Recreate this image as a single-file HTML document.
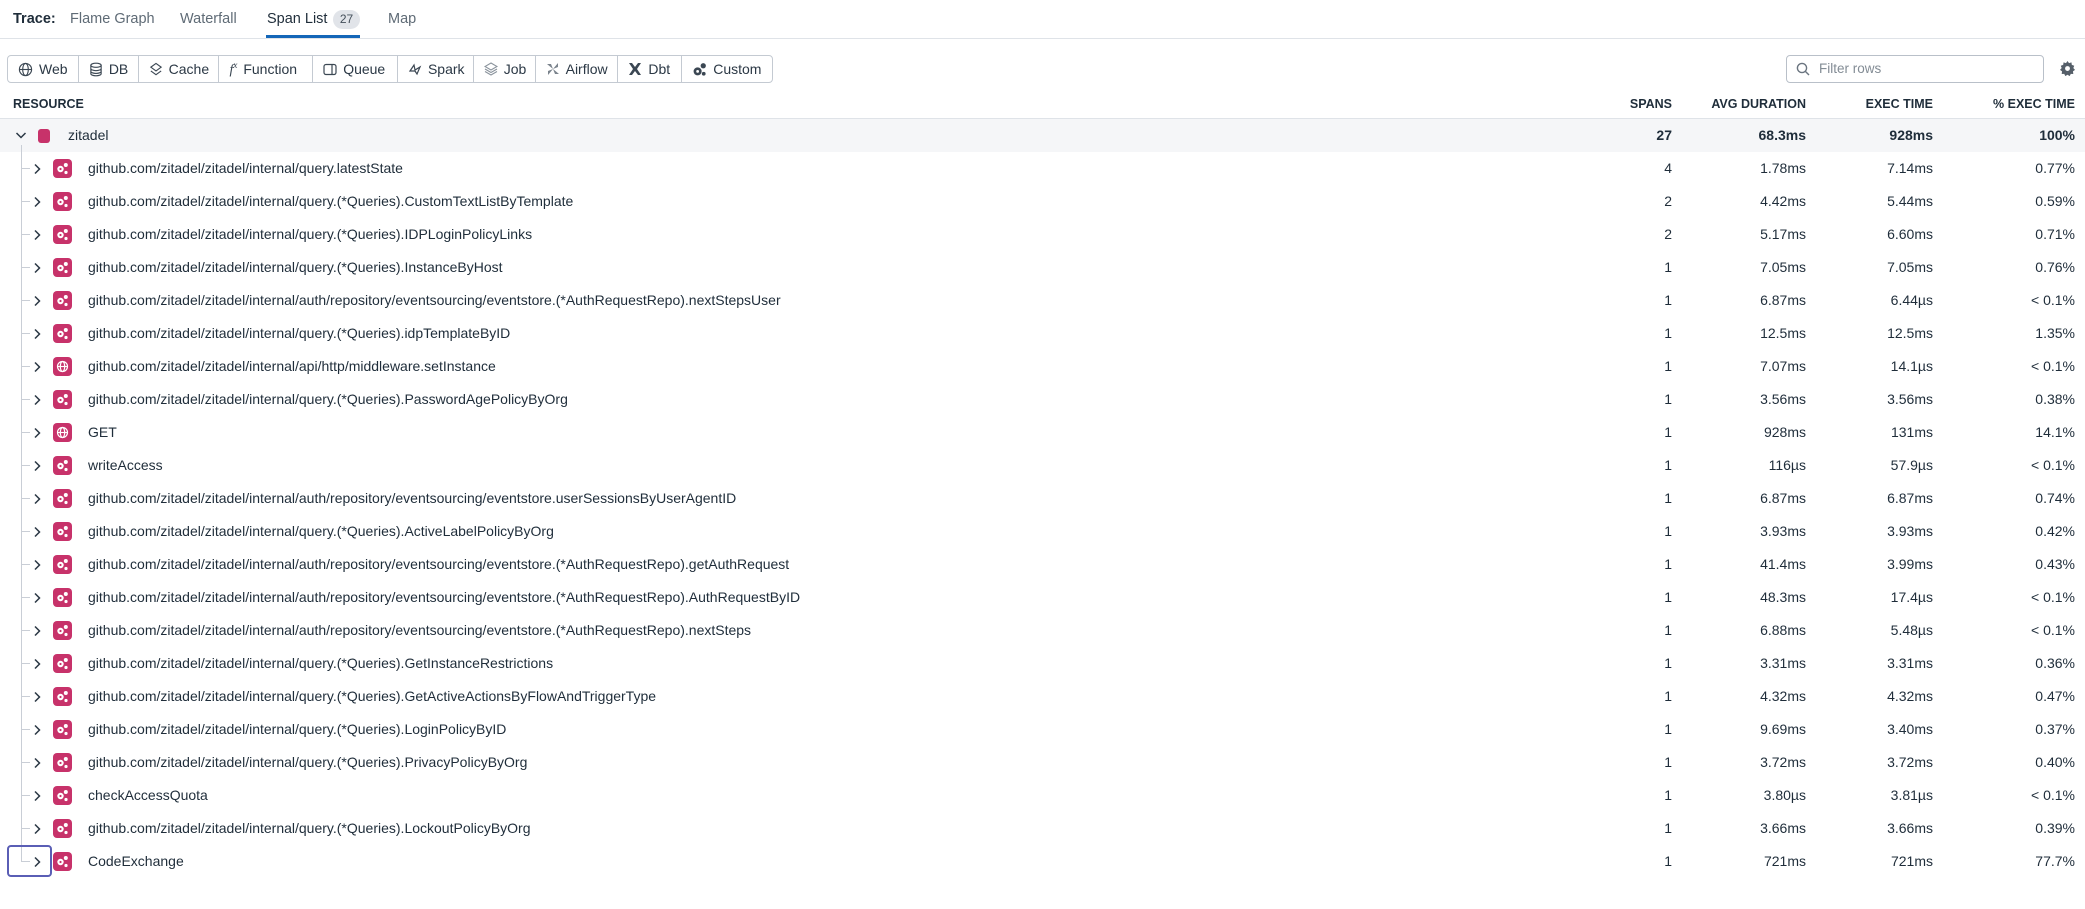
<!DOCTYPE html>
<html><head><meta charset="utf-8"><style>
*{box-sizing:border-box;margin:0;padding:0}
body{width:2085px;height:909px;background:#fff;font-family:"Liberation Sans",sans-serif;color:#1f2d3a;font-size:14px;position:relative;overflow:hidden}
.a{position:absolute;white-space:nowrap}
.tab{top:11px;font-size:14.5px;color:#5f6b76}
.btnbar{position:absolute;left:7px;top:55px;width:766px;height:28px;border:1px solid #c4cad2;border-radius:4px;display:flex}
.btn{height:100%;border-right:1px solid #c4cad2;display:flex;align-items:center;gap:6px;padding-left:10px;font-size:14px;color:#2b3845}
.btn:last-child{border-right:none}
.btn svg{flex:none}
.hd{top:97px;font-size:12.5px;font-weight:bold;color:#1f2d3a}
.row{position:absolute;left:0;width:2085px;height:33px}
.row .c{position:absolute;top:8px;font-size:14px}
.r{text-align:right}
.ic{position:absolute;left:53px;top:7px;width:19px;height:19px;border-radius:4px;background:#c7326a}
.chev{position:absolute;left:33px;top:11px}
.stub{position:absolute;left:21px;top:16px;width:9px;height:1px;background:#c9ced6}
</style></head><body>
<div class="a tab" style="left:13px;color:#1f2d3a;font-weight:bold">Trace:</div>
<div class="a tab" style="left:70px">Flame Graph</div>
<div class="a tab" style="left:180px">Waterfall</div>
<div class="a tab" style="left:267px;color:#1f2d3a">Span List</div>
<div class="a" style="left:333px;top:10px;width:27px;height:19px;border-radius:10px;background:#e1e4e9;font-size:12px;color:#444f5a;text-align:center;line-height:19px">27</div>
<div class="a tab" style="left:388px">Map</div>
<div class="a" style="left:266px;top:35px;width:94px;height:3px;background:#1466b8"></div>
<div class="a" style="left:0;top:38px;width:2085px;height:1px;background:#dfe3e8"></div>

<div class="btnbar">
<div class="btn" style="width:71px"><svg width="15" height="15" viewBox="0 0 16 16" fill="none" stroke="#3b4753" stroke-width="1.2"><circle cx="8" cy="8" r="6.5"/><ellipse cx="8" cy="8" rx="3" ry="6.5"/><path d="M1.5 8h13"/></svg>Web</div>
<div class="btn" style="width:60px"><svg width="14" height="15" viewBox="0 0 14 16" fill="none" stroke="#3b4753" stroke-width="1.2"><ellipse cx="7" cy="3.5" rx="5.5" ry="2.2"/><path d="M1.5 3.5v9c0 1.2 2.5 2.2 5.5 2.2s5.5-1 5.5-2.2v-9M1.5 7c0 1.2 2.5 2.2 5.5 2.2s5.5-1 5.5-2.2M1.5 10c0 1.2 2.5 2.2 5.5 2.2s5.5-1 5.5-2.2"/></svg>DB</div>
<div class="btn" style="width:81px"><svg width="14" height="15" viewBox="0 0 14 16" fill="none" stroke="#3b4753" stroke-width="1.2"><path d="M7 1.5l5.5 4-5.5 4-5.5-4zM1.5 9.5l5.5 4 5.5-4"/></svg>Cache</div>
<div class="btn" style="width:94px"><span style="font-style:italic;font-family:'Liberation Serif',serif;font-size:14px;color:#3b4753">f<sup style="font-size:9px">x</sup></span>Function</div>
<div class="btn" style="width:85px"><svg width="14" height="13" viewBox="0 0 14 13" fill="none" stroke="#3b4753" stroke-width="1.2"><rect x="1" y="1.5" width="12" height="10" rx="2"/><path d="M9 1.5v10"/></svg>Queue</div>
<div class="btn" style="width:76px"><svg width="14" height="14" viewBox="0 0 14 14" fill="none" stroke="#3b4753" stroke-width="1.2"><path d="M2 9l4-6 1 5 5-3-3 7-2-3z"/></svg>Spark</div>
<div class="btn" style="width:62px"><svg width="14" height="14" viewBox="0 0 14 14" fill="none" stroke="#8a939c" stroke-width="1.1"><path d="M7 1l6 3.5-6 3.5-6-3.5zM1 7l6 3.5 6-3.5M1 9.5l6 3.5 6-3.5"/></svg>Job</div>
<div class="btn" style="width:83px"><svg width="14" height="14" viewBox="0 0 14 14" fill="#7a838c"><path d="M7 7L1 2l4 0zM7 7l5-6v4zM7 7l6 5h-4zM7 7l-5 6V9z"/></svg>Airflow</div>
<div class="btn" style="width:64px"><svg width="14" height="14" viewBox="0 0 14 14" fill="#3b4753"><path d="M1 1h3l3 4 3-4h3l-4 6 4 6h-3l-3-4-3 4H1l4-6z"/></svg>Dbt</div>
<div class="btn" style="width:90px"><svg width="15" height="15" viewBox="0 0 16 16" fill="#3b4753"><circle cx="6" cy="10" r="4.3"/><circle cx="12" cy="4" r="2.8"/><circle cx="12.5" cy="12.5" r="2"/><circle cx="6" cy="10" r="1.5" fill="#fff"/></svg>Custom</div>
</div>

<div class="a" style="left:1786px;top:55px;width:258px;height:28px;border:1px solid #b9c0c9;border-radius:4px"></div>
<svg class="a" style="left:1796px;top:62px" width="14" height="14" viewBox="0 0 14 14" fill="none" stroke="#6b7580" stroke-width="1.4"><circle cx="6" cy="6" r="4.6"/><path d="M9.5 9.5l3.5 3.5"/></svg>
<div class="a" style="left:1819px;top:61px;font-size:13.5px;color:#838c95">Filter rows</div>
<svg class="a" style="left:2060px;top:61px" width="15" height="15" viewBox="0 0 16 16"><path fill="#555f69" d="M8 0l1.6 2.2 2.6-.8.4 2.7 2.6.9-1 2.5 1.8 2-2.2 1.6.4 2.7-2.7-.1-1.2 2.4L8 14.6l-2.3 1.5-1.2-2.4-2.7.1.4-2.7L0 9.5l1.8-2-1-2.5 2.6-.9.4-2.7 2.6.8z"/><circle cx="8" cy="8" r="2.6" fill="#fff"/></svg>

<div class="a hd" style="left:13px">RESOURCE</div>
<div class="a hd r" style="right:413px">SPANS</div>
<div class="a hd r" style="right:279px">AVG DURATION</div>
<div class="a hd r" style="right:152px">EXEC TIME</div>
<div class="a hd r" style="right:10px">% EXEC TIME</div>
<div class="a" style="left:0;top:118px;width:2085px;height:1px;background:#dfe3e8"></div>

<div class="row" style="top:119px;background:#f5f6f8;height:33px">
<svg class="a" style="left:15px;top:12px" width="12" height="9" viewBox="0 0 12 9" fill="none" stroke="#2b3845" stroke-width="1.5"><path d="M1.5 2l4.5 4.5L10.5 2"/></svg>
<div class="a" style="left:38px;top:10px;width:12px;height:14px;border-radius:3px;background:#c7326a"></div>
<div class="c" style="left:68px">zitadel</div>
<div class="c r" style="right:413px;font-weight:bold">27</div>
<div class="c r" style="right:279px;font-weight:bold">68.3ms</div>
<div class="c r" style="right:152px;font-weight:bold">928ms</div>
<div class="c r" style="right:10px;font-weight:bold">100%</div>
</div>
<div class="a" style="left:21px;top:145px;width:1px;height:717px;background:#c9ced6"></div>
<div class="a" style="left:7px;top:845px;width:45px;height:32px;border:2px solid #5a5eb5;border-radius:4px"></div>

<div id="rows"></div>
<script>
var d=[["github.com/zitadel/zitadel/internal/query.latestState","4","1.78ms","7.14ms","0.77%"],
["github.com/zitadel/zitadel/internal/query.(*Queries).CustomTextListByTemplate","2","4.42ms","5.44ms","0.59%"],
["github.com/zitadel/zitadel/internal/query.(*Queries).IDPLoginPolicyLinks","2","5.17ms","6.60ms","0.71%"],
["github.com/zitadel/zitadel/internal/query.(*Queries).InstanceByHost","1","7.05ms","7.05ms","0.76%"],
["github.com/zitadel/zitadel/internal/auth/repository/eventsourcing/eventstore.(*AuthRequestRepo).nextStepsUser","1","6.87ms","6.44µs","< 0.1%"],
["github.com/zitadel/zitadel/internal/query.(*Queries).idpTemplateByID","1","12.5ms","12.5ms","1.35%"],
["github.com/zitadel/zitadel/internal/api/http/middleware.setInstance","1","7.07ms","14.1µs","< 0.1%",1],
["github.com/zitadel/zitadel/internal/query.(*Queries).PasswordAgePolicyByOrg","1","3.56ms","3.56ms","0.38%"],
["GET","1","928ms","131ms","14.1%",1],
["writeAccess","1","116µs","57.9µs","< 0.1%"],
["github.com/zitadel/zitadel/internal/auth/repository/eventsourcing/eventstore.userSessionsByUserAgentID","1","6.87ms","6.87ms","0.74%"],
["github.com/zitadel/zitadel/internal/query.(*Queries).ActiveLabelPolicyByOrg","1","3.93ms","3.93ms","0.42%"],
["github.com/zitadel/zitadel/internal/auth/repository/eventsourcing/eventstore.(*AuthRequestRepo).getAuthRequest","1","41.4ms","3.99ms","0.43%"],
["github.com/zitadel/zitadel/internal/auth/repository/eventsourcing/eventstore.(*AuthRequestRepo).AuthRequestByID","1","48.3ms","17.4µs","< 0.1%"],
["github.com/zitadel/zitadel/internal/auth/repository/eventsourcing/eventstore.(*AuthRequestRepo).nextSteps","1","6.88ms","5.48µs","< 0.1%"],
["github.com/zitadel/zitadel/internal/query.(*Queries).GetInstanceRestrictions","1","3.31ms","3.31ms","0.36%"],
["github.com/zitadel/zitadel/internal/query.(*Queries).GetActiveActionsByFlowAndTriggerType","1","4.32ms","4.32ms","0.47%"],
["github.com/zitadel/zitadel/internal/query.(*Queries).LoginPolicyByID","1","9.69ms","3.40ms","0.37%"],
["github.com/zitadel/zitadel/internal/query.(*Queries).PrivacyPolicyByOrg","1","3.72ms","3.72ms","0.40%"],
["checkAccessQuota","1","3.80µs","3.81µs","< 0.1%"],
["github.com/zitadel/zitadel/internal/query.(*Queries).LockoutPolicyByOrg","1","3.66ms","3.66ms","0.39%"],
["CodeExchange","1","721ms","721ms","77.7%"]];
var gear='<svg width="19" height="19" viewBox="0 0 19 19"><circle cx="7.5" cy="10" r="3.2" fill="#fff"/><circle cx="7.5" cy="10" r="1.1" fill="#c7326a"/><circle cx="12.8" cy="6" r="2" fill="#fff"/><circle cx="13" cy="13.5" r="1.6" fill="#fff"/></svg>';
var globe='<svg width="19" height="19" viewBox="0 0 19 19" fill="none" stroke="#fff" stroke-width="1.2"><circle cx="9.5" cy="9.5" r="5"/><ellipse cx="9.5" cy="9.5" rx="2.2" ry="5"/><path d="M4.5 9.5h10"/></svg>';
var h='';
d.forEach(function(r,i){var t=152+i*33;
h+='<div class="row" style="top:'+t+'px"><div class="stub"></div><svg class="chev" width="9" height="12" viewBox="0 0 9 12" fill="none" stroke="#2b3845" stroke-width="1.5"><path d="M2 1.5l4.5 4.5L2 10.5"/></svg><div class="ic">'+(r[5]?globe:gear)+'</div><div class="c" style="left:88px">'+r[0]+'</div><div class="c r" style="right:413px">'+r[1]+'</div><div class="c r" style="right:279px">'+r[2]+'</div><div class="c r" style="right:152px">'+r[3]+'</div><div class="c r" style="right:10px">'+r[4]+'</div></div>';});
document.getElementById('rows').innerHTML=h;
</script>
</body></html>
